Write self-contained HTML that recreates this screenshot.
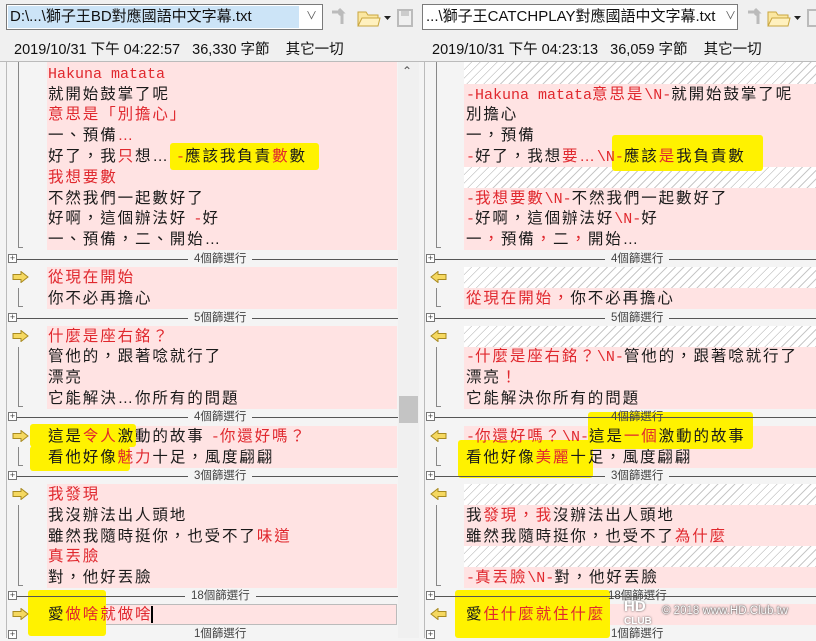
<!DOCTYPE html>
<html><head><meta charset="utf-8">
<style>
*{margin:0;padding:0;box-sizing:border-box}
body{width:816px;height:638px;overflow:hidden;background:#f4f4f4;position:relative;font-family:"Liberation Sans","Noto Sans CJK TC",sans-serif;color:#222}
.a{position:absolute}
.t{position:absolute;height:21px;line-height:21px;white-space:nowrap;font-size:15.5px;letter-spacing:1.9px;font-family:"Liberation Sans","Noto Sans CJK TC",sans-serif;color:#1a1a1a}
.m{font-family:"Liberation Mono",monospace;font-size:15px;letter-spacing:0}
.r{color:#e0282e}
.pk{position:absolute;background:#ffe3e3}
.ht{position:absolute;background:repeating-linear-gradient(135deg,#fff 0 5px,#c8c8c8 5px 6px)}
.hl{position:absolute;background:#fff200;border-radius:3px}
.sep{position:absolute;height:1px;background:#555}
.sl{position:absolute;font-size:11.5px;color:#444;background:#f4f4f4;padding:0 6px;line-height:14px;font-family:"Liberation Sans","Noto Sans CJK TC",sans-serif}
.pl{position:absolute;width:9px;height:9px;border:1px solid #777;background:#fff;font-size:9px;line-height:7px;text-align:center;color:#444}
.br{position:absolute;border-left:1px solid #888;border-bottom:1px solid #888;width:5px}
.ar{position:absolute;width:17px;height:12px}
</style></head><body>
<!-- header -->
<div class="a" style="left:0;top:0;width:816px;height:62px;background:#f0f0f0"></div>
<div class="a" style="left:6px;top:4px;width:317px;height:26px;background:#fff;border:1px solid #7a7a7a"></div>
<div class="a" style="left:8px;top:6px;width:291px;height:22px;background:#cce4f7"></div>
<div class="a" style="left:10px;top:6px;font-size:15px;line-height:22px;white-space:nowrap;color:#111">D:\...\獅子王BD對應國語中文字幕.txt</div>
<div class="a" style="left:306px;top:7px;font-size:11px;color:#555">&#8744;</div>
<div class="a" style="left:422px;top:4px;width:316px;height:26px;background:#fff;border:1px solid #7a7a7a"></div>
<div class="a" style="left:426px;top:6px;font-size:15px;line-height:22px;white-space:nowrap;color:#111">...\獅子王CATCHPLAY對應國語中文字幕.txt</div>
<div class="a" style="left:725px;top:7px;font-size:11px;color:#555">&#8744;</div>
<svg class="a" style="left:328px;top:6px" width="90" height="24"><path d="M4 6h10l-3-3M14 6l-3 3M14 6v12" stroke="#bbb" stroke-width="3" fill="none"/><path d="M30 6h8l2 3h10v11H30z" fill="#fbe7a1" stroke="#c9a640"/><path d="M30 20l4-8h18l-2 8z" fill="#fff1bf" stroke="#c9a640"/><path d="M56 10h7l-3.5 4z" fill="#222"/><rect x="70" y="4" width="14" height="16" fill="none" stroke="#bbb" stroke-width="2"/><rect x="73" y="5" width="8" height="5" fill="#ccc"/></svg>
<svg class="a" style="left:744px;top:6px" width="72" height="24"><path d="M4 6h10l-3-3M14 6l-3 3M14 6v12" stroke="#bbb" stroke-width="3" fill="none"/><path d="M24 6h8l2 3h10v11H24z" fill="#fbe7a1" stroke="#c9a640"/><path d="M24 20l4-8h18l-2 8z" fill="#fff1bf" stroke="#c9a640"/><path d="M50 10h7l-3.5 4z" fill="#222"/><rect x="64" y="4" width="14" height="16" fill="none" stroke="#bbb" stroke-width="2"/></svg>
<div class="a" style="left:14px;top:38px;font-size:14.5px;white-space:nowrap;color:#111">2019/10/31 下午 04:22:57 &nbsp;&nbsp;36,330 字節 &nbsp;&nbsp;&nbsp;其它一切</div>
<div class="a" style="left:432px;top:38px;font-size:14.5px;white-space:nowrap;color:#111">2019/10/31 下午 04:23:13 &nbsp;&nbsp;36,059 字節 &nbsp;&nbsp;&nbsp;其它一切</div>
<div class="a" style="left:0;top:61px;width:816px;height:1px;background:#bbb"></div>
<div class="a" style="left:6px;top:62px;width:1px;height:576px;background:#bbb"></div>
<div class="a" style="left:424px;top:62px;width:1px;height:576px;background:#bbb"></div>
<!-- scrollbar -->
<div class="a" style="left:398px;top:62px;width:21px;height:576px;background:#f0f0f0"></div>
<div class="a" style="left:402px;top:64px;font-size:12px;color:#555">&#8963;</div>
<div class="a" style="left:399px;top:396px;width:19px;height:27px;background:#c4c4c4"></div>

<!-- pink/hatch blocks -->
<div class="pk" style="left:47px;top:62px;width:350px;height:188px"></div>
<div class="pk" style="left:47px;top:267px;width:350px;height:42px"></div>
<div class="pk" style="left:47px;top:326px;width:350px;height:83px"></div>
<div class="pk" style="left:47px;top:426px;width:350px;height:42px"></div>
<div class="pk" style="left:47px;top:484px;width:350px;height:104px"></div>
<div class="pk" style="left:47px;top:604px;width:350px;height:21px;border:1px solid #bbb"></div>

<div class="ht" style="left:464px;top:62px;width:352px;height:22px"></div>
<div class="pk" style="left:464px;top:84px;width:352px;height:83px"></div>
<div class="ht" style="left:464px;top:167px;width:352px;height:21px"></div>
<div class="pk" style="left:464px;top:188px;width:352px;height:62px"></div>
<div class="ht" style="left:464px;top:267px;width:352px;height:21px"></div>
<div class="pk" style="left:464px;top:288px;width:352px;height:21px"></div>
<div class="ht" style="left:464px;top:326px;width:352px;height:21px"></div>
<div class="pk" style="left:464px;top:347px;width:352px;height:62px"></div>
<div class="pk" style="left:464px;top:426px;width:352px;height:42px"></div>
<div class="ht" style="left:464px;top:484px;width:352px;height:21px"></div>
<div class="pk" style="left:464px;top:505px;width:352px;height:41px"></div>
<div class="ht" style="left:464px;top:546px;width:352px;height:21px"></div>
<div class="pk" style="left:464px;top:567px;width:352px;height:21px"></div>
<div class="pk" style="left:464px;top:604px;width:352px;height:21px"></div>

<!-- highlights -->
<div class="hl" style="left:170px;top:143px;width:149px;height:27px"></div>
<div class="hl" style="left:30px;top:424px;width:106px;height:23px"></div>
<div class="hl" style="left:30px;top:446px;width:100px;height:25px"></div>
<div class="hl" style="left:28px;top:590px;width:78px;height:46px"></div>
<div class="hl" style="left:612px;top:135px;width:151px;height:36px"></div>
<div class="hl" style="left:588px;top:412px;width:165px;height:37px"></div>
<div class="hl" style="left:458px;top:440px;width:135px;height:38px"></div>
<div class="hl" style="left:455px;top:590px;width:155px;height:48px"></div>

<!-- separators -->
<div class="sep" style="left:14px;top:259px;width:384px"></div><div class="sl" style="left:188px;top:252px">4個篩選行</div>
<div class="sep" style="left:14px;top:318px;width:384px"></div><div class="sl" style="left:188px;top:311px">5個篩選行</div>
<div class="sep" style="left:14px;top:417px;width:384px"></div><div class="sl" style="left:188px;top:410px">4個篩選行</div>
<div class="sep" style="left:14px;top:476px;width:384px"></div><div class="sl" style="left:188px;top:469px">3個篩選行</div>
<div class="sep" style="left:14px;top:596px;width:384px"></div><div class="sl" style="left:185px;top:589px">18個篩選行</div>
<div class="sl" style="left:188px;top:627px">1個篩選行</div>
<div class="sep" style="left:432px;top:259px;width:384px"></div><div class="sl" style="left:605px;top:252px">4個篩選行</div>
<div class="sep" style="left:432px;top:318px;width:384px"></div><div class="sl" style="left:605px;top:311px">5個篩選行</div>
<div class="sep" style="left:432px;top:417px;width:384px"></div><div class="sl" style="left:605px;top:410px;background:transparent">4個篩選行</div>
<div class="sep" style="left:432px;top:476px;width:384px"></div><div class="sl" style="left:605px;top:469px">3個篩選行</div>
<div class="sep" style="left:432px;top:596px;width:384px"></div><div class="sl" style="left:602px;top:589px;background:transparent">18個篩選行</div>
<div class="sl" style="left:605px;top:627px;background:transparent">1個篩選行</div>

<!-- plus boxes -->
<div class="pl" style="left:8px;top:254px">+</div><div class="pl" style="left:8px;top:313px">+</div><div class="pl" style="left:8px;top:412px">+</div><div class="pl" style="left:8px;top:471px">+</div><div class="pl" style="left:8px;top:591px">+</div><div class="pl" style="left:8px;top:630px">+</div>
<div class="pl" style="left:426px;top:254px">+</div><div class="pl" style="left:426px;top:313px">+</div><div class="pl" style="left:426px;top:412px">+</div><div class="pl" style="left:426px;top:471px">+</div><div class="pl" style="left:426px;top:591px">+</div><div class="pl" style="left:426px;top:630px">+</div>

<!-- brackets -->
<div class="br" style="left:18px;top:62px;height:186px"></div>
<div class="br" style="left:18px;top:288px;height:19px"></div>
<div class="br" style="left:18px;top:347px;height:60px"></div>
<div class="br" style="left:18px;top:447px;height:19px"></div>
<div class="br" style="left:18px;top:505px;height:81px"></div>
<div class="br" style="left:436px;top:62px;height:186px"></div>
<div class="br" style="left:436px;top:288px;height:19px"></div>
<div class="br" style="left:436px;top:347px;height:60px"></div>
<div class="br" style="left:436px;top:447px;height:19px"></div>
<div class="br" style="left:436px;top:505px;height:81px"></div>

<!-- arrows -->
<svg class="ar" style="left:12px;top:271px" viewBox="0 0 17 12"><path d="M1 3.5h8V.5l7 5.5-7 5.5v-3H1z" fill="#f5d860" stroke="#a88a20"/></svg>
<svg class="ar" style="left:12px;top:330px" viewBox="0 0 17 12"><path d="M1 3.5h8V.5l7 5.5-7 5.5v-3H1z" fill="#f5d860" stroke="#a88a20"/></svg>
<svg class="ar" style="left:12px;top:430px" viewBox="0 0 17 12"><path d="M1 3.5h8V.5l7 5.5-7 5.5v-3H1z" fill="#f5d860" stroke="#a88a20"/></svg>
<svg class="ar" style="left:12px;top:488px" viewBox="0 0 17 12"><path d="M1 3.5h8V.5l7 5.5-7 5.5v-3H1z" fill="#f5d860" stroke="#a88a20"/></svg>
<svg class="ar" style="left:12px;top:608px" viewBox="0 0 17 12"><path d="M1 3.5h8V.5l7 5.5-7 5.5v-3H1z" fill="#f5d860" stroke="#a88a20"/></svg>
<svg class="ar" style="left:430px;top:271px" viewBox="0 0 17 12"><path d="M16 3.5H8V.5L1 6l7 5.5v-3h8z" fill="#f5d860" stroke="#a88a20"/></svg>
<svg class="ar" style="left:430px;top:330px" viewBox="0 0 17 12"><path d="M16 3.5H8V.5L1 6l7 5.5v-3h8z" fill="#f5d860" stroke="#a88a20"/></svg>
<svg class="ar" style="left:430px;top:430px" viewBox="0 0 17 12"><path d="M16 3.5H8V.5L1 6l7 5.5v-3h8z" fill="#f5d860" stroke="#a88a20"/></svg>
<svg class="ar" style="left:430px;top:488px" viewBox="0 0 17 12"><path d="M16 3.5H8V.5L1 6l7 5.5v-3h8z" fill="#f5d860" stroke="#a88a20"/></svg>
<svg class="ar" style="left:430px;top:608px" viewBox="0 0 17 12"><path d="M16 3.5H8V.5L1 6l7 5.5v-3h8z" fill="#f5d860" stroke="#a88a20"/></svg>

<!-- left text -->
<div class="t" style="left:48px;top:63px"><span class="m r">Hakuna matata</span></div>
<div class="t" style="left:48px;top:84px">就開始鼓掌了呢</div>
<div class="t r" style="left:48px;top:104px">意思是「別擔心」</div>
<div class="t" style="left:48px;top:125px">一、預備<span class="r">…</span></div>
<div class="t" style="left:48px;top:146px">好了，我<span class="r">只</span>想… <span class="m r">-</span>應該我負責<span class="r">數</span>數</div>
<div class="t r" style="left:48px;top:167px">我想要數</div>
<div class="t" style="left:48px;top:188px">不然我們一起數好了</div>
<div class="t" style="left:48px;top:208px">好啊，這個辦法好 <span class="m r">-</span>好</div>
<div class="t" style="left:48px;top:229px">一、預備，二、開始…</div>
<div class="t r" style="left:48px;top:267px">從現在開始</div>
<div class="t" style="left:48px;top:288px">你不必再擔心</div>
<div class="t r" style="left:48px;top:326px">什麼是座右銘？</div>
<div class="t" style="left:48px;top:346px">管他的，跟著唸就行了</div>
<div class="t" style="left:48px;top:367px">漂亮</div>
<div class="t" style="left:48px;top:388px">它能解決…你所有的問題</div>
<div class="t" style="left:48px;top:426px">這是<span class="r">令人</span>激動的故事 <span class="r"><span class="m">-</span>你還好嗎？</span></div>
<div class="t" style="left:48px;top:447px">看他好像<span class="r">魅力</span>十足，風度翩翩</div>
<div class="t r" style="left:48px;top:484px">我發現</div>
<div class="t" style="left:48px;top:505px">我沒辦法出人頭地</div>
<div class="t" style="left:48px;top:526px">雖然我隨時挺你，也受不了<span class="r">味道</span></div>
<div class="t r" style="left:48px;top:546px">真丟臉</div>
<div class="t" style="left:48px;top:567px">對，他好丟臉</div>
<div class="t" style="left:48px;top:604px">愛<span class="r">做啥就做啥</span><span style="border-left:2px solid #000;margin-left:-1px"></span></div>

<!-- right text -->
<div class="t" style="left:466px;top:84px"><span class="r"><span class="m">-Hakuna matata</span>意思是<span class="m">\N-</span></span>就開始鼓掌了呢</div>
<div class="t" style="left:466px;top:104px">別擔心</div>
<div class="t" style="left:466px;top:125px">一，預備</div>
<div class="t" style="left:466px;top:146px"><span class="m r">-</span>好了，我想<span class="r">要…<span class="m">\N</span></span><span class="m r">-</span>應該<span class="r">是</span>我負責數</div>
<div class="t" style="left:466px;top:188px"><span class="r"><span class="m">-</span>我想要數<span class="m">\N-</span></span>不然我們一起數好了</div>
<div class="t" style="left:466px;top:208px"><span class="m r">-</span>好啊，這個辦法好<span class="m r">\N-</span>好</div>
<div class="t" style="left:466px;top:229px">一<span class="r">，</span>預備<span class="r">，</span>二<span class="r">，</span>開始…</div>
<div class="t" style="left:466px;top:288px"><span class="r">從現在開始，</span>你不必再擔心</div>
<div class="t" style="left:466px;top:346px"><span class="r"><span class="m">-</span>什麼是座右銘？<span class="m">\N-</span></span>管他的，跟著唸就行了</div>
<div class="t" style="left:466px;top:367px">漂亮<span class="r">！</span></div>
<div class="t" style="left:466px;top:388px">它能解決你所有的問題</div>
<div class="t" style="left:466px;top:426px"><span class="r"><span class="m">-</span>你還好嗎？<span class="m">\N-</span></span>這是<span class="r">一個</span>激動的故事</div>
<div class="t" style="left:466px;top:447px">看他好像<span class="r">美麗</span>十足，風度翩翩</div>
<div class="t" style="left:466px;top:505px">我<span class="r">發現，我</span>沒辦法出人頭地</div>
<div class="t" style="left:466px;top:526px">雖然我隨時挺你，也受不了<span class="r">為什麼</span></div>
<div class="t" style="left:466px;top:567px"><span class="r"><span class="m">-</span>真丟臉<span class="m">\N-</span></span>對，他好丟臉</div>
<div class="t" style="left:466px;top:604px">愛<span class="r">住什麼就住什麼</span></div>

<!-- watermark -->
<div class="a" style="left:624px;top:600px;font:bold 15px 'Liberation Sans',sans-serif;color:#fff;text-shadow:0 0 2px #555;line-height:13px">HD<br><span style="font-size:10px">CLUB</span></div>
<div class="a" style="left:662px;top:605px;font:11.5px 'Liberation Sans',sans-serif;color:#fff;text-shadow:0 0 2px #444,0 0 1px #444;white-space:nowrap">© 2018 www.HD.Club.tw</div>
</body></html>
